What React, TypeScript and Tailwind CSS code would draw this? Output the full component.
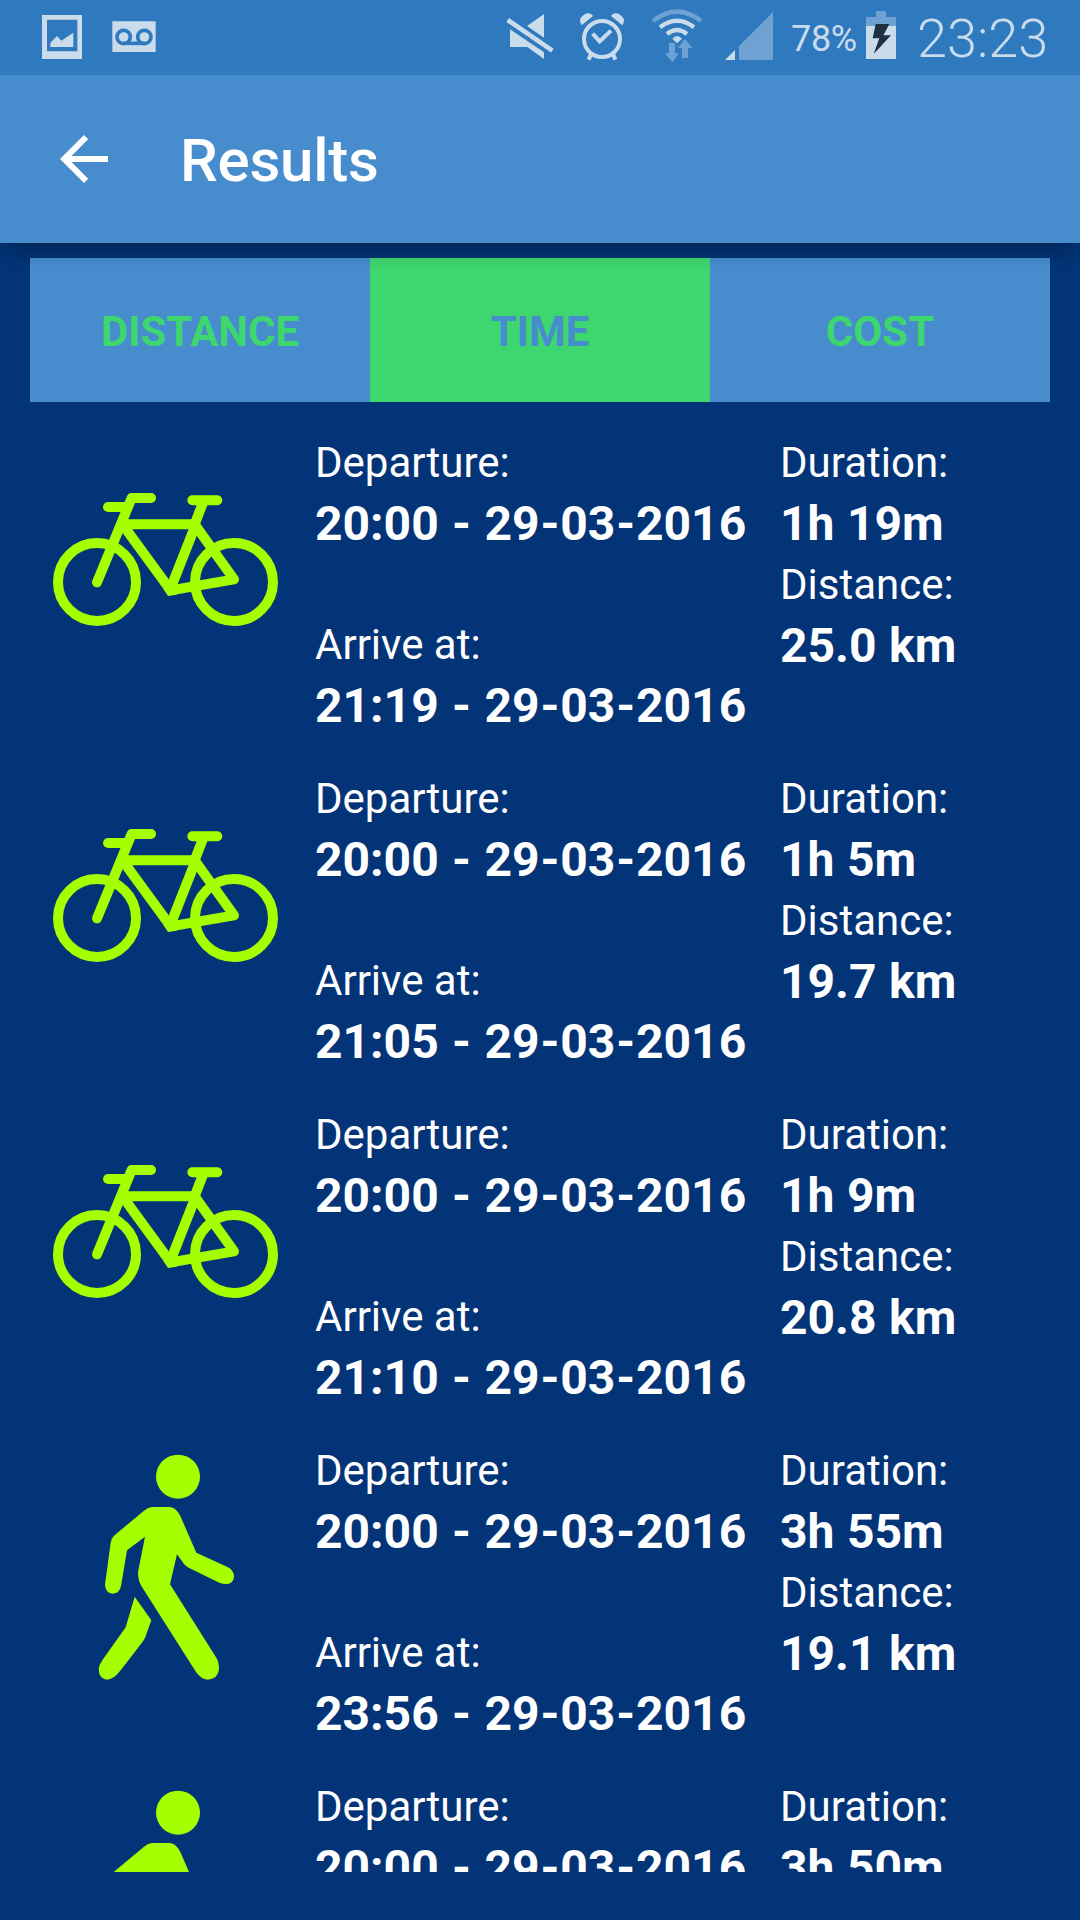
import React from "react";

type Mode = "bike" | "walk";

interface Trip {
  mode: Mode;
  departure: string;
  arrival: string;
  duration: string;
  distance: string;
}

const trips: Trip[] = [
  { mode: "bike", departure: "20:00 - 29-03-2016", arrival: "21:19 - 29-03-2016", duration: "1h 19m", distance: "25.0 km" },
  { mode: "bike", departure: "20:00 - 29-03-2016", arrival: "21:05 - 29-03-2016", duration: "1h 5m", distance: "19.7 km" },
  { mode: "bike", departure: "20:00 - 29-03-2016", arrival: "21:10 - 29-03-2016", duration: "1h 9m", distance: "20.8 km" },
  { mode: "walk", departure: "20:00 - 29-03-2016", arrival: "23:56 - 29-03-2016", duration: "3h 55m", distance: "19.1 km" },
  { mode: "walk", departure: "20:00 - 29-03-2016", arrival: "23:50 - 29-03-2016", duration: "3h 50m", distance: "18.7 km" },
];

function BikeIcon() {
  return (
    <svg className="mt-[53px] h-[180px] w-[270px]" viewBox="0 0 810 540" fill="none" stroke="#a5ff00" strokeWidth="30" strokeLinecap="round" strokeLinejoin="round">
      <circle cx="201" cy="336" r="117" />
      <circle cx="612" cy="336" r="117" />
      <path d="M201 337 L305 84 H363" />
      <path d="M234 111 H290" />
      <path d="M275 163 H496" />
      <path d="M487 91 H562 M520 95 L494 163 L612 328 L422 361" />
      <path d="M494 172 L424 350" />
      <path d="M281 168 L422 361" strokeLinecap="butt" />
      <path d="M400 356 L414 378 L440 374 L436 340 Z" fill="#a5ff00" stroke="none" />
    </svg>
  );
}

function WalkIcon() {
  return (
    <svg className="ml-[50px] mt-[5px] h-[270px] w-[180px]" viewBox="0 0 540 810" fill="#a5ff00">
      <circle cx="294" cy="140" r="66" />
      <path d="M216 231 H268 Q286 231 300 256 L349 368 L444 412 Q462 422 462 440 Q460 462 438 462 Q428 462 418 458 L326 413 Q318 409 312 402 L291 373 L270 463 L408 682 Q417 696 417 718 Q413 748 383 749 Q364 748 348 726 L184 468 Q174 452 174 426 L195 320 L141 361 L123 468 Q119 490 98 491 Q76 489 75 464 L92 338 Q94 325 102 317 L192 242 Q204 232 216 231 Z" />
      <path d="M164 500 L214 571 L196 621 Q193 629 188 635 L122 721 Q102 748 82 749 Q57 747 56 718 Q57 704 68 689 L137 592 Z" />
    </svg>
  );
}

function StatusBar() {
  return (
    <div className="flex h-[75px] shrink-0 items-start bg-[#2f79bf] text-[#cadcec]">
      <svg className="h-[75px] w-[240px]" viewBox="0 0 720 225" fill="#cadcec">
        <path fillRule="evenodd" d="M126 45 H246 V177 H126 Z M141 59 V154 H232 V59 Z" />
        <path d="M151 141 V129 L171 108 L184 122 L220 98 V141 Z" />
        <path d="M337 64 H467 V156 H337 Z" />
        <g fill="none" stroke="#2f79bf" strokeWidth="11">
          <circle cx="371" cy="111" r="20" />
          <circle cx="433" cy="111" r="20" />
          <path d="M371 130 H433" />
        </g>
      </svg>
      <svg className="ml-[250px] h-[75px] w-[300px]" viewBox="0 0 900 225" fill="#cadcec">
        <path d="M162 42 V113 L111 78 Z M60 88 L162 157 V177 L112 141 H60 Z" />
        <path d="M53 60 L187 152" stroke="#cadcec" strokeWidth="14" />
        <g fill="none" stroke="#cadcec">
          <circle cx="336" cy="117" r="54" strokeWidth="12" />
          <path d="M308 101 L329 124 L363 92" strokeWidth="12" />
          <path d="M302 164 L296 179 M370 164 L376 179" strokeWidth="12" />
        </g>
        <path d="M275 76 Q267 63 272 54 Q284 38 298 40 Q307 43 309 48 Z M397 76 Q405 63 400 54 Q388 38 374 40 Q365 43 363 48 Z" />
        <g fill="none" stroke="#6da2d3">
          <path d="M489 63 Q561 7 633 63" strokeWidth="14" />
        </g>
        <g fill="none" stroke="#cadcec" strokeWidth="13">
          <path d="M510 82 Q561 43 612 82" />
          <path d="M531 102 Q561 78 591 102" />
        </g>
        <path d="M547 116 Q561 100 576 116 L561 130 Z" />
        <g fill="#6da2d3">
          <path d="M537 129 H555 V160 H566 L547 187 L525 160 H537 Z" />
          <path d="M585 117 L607 144 H594 V174 H576 V144 H564 Z" />
          <path d="M747 180 V138 L849 36 V180 Z" />
        </g>
        <path d="M705 180 L735 150 V180 Z" />
      </svg>
      <span className="ml-px mt-[18px] w-[75px] whitespace-nowrap text-[36px] leading-[42px] tracking-[-0.3px]">78%</span>
      <svg className="h-[75px] w-[30px]" viewBox="0 0 90 225">
        <path d="M0 51 H30 V33 H60 V51 H90 V80 H0 Z" fill="#6da2d3" />
        <path d="M0 78 H90 V177 H0 Z" fill="#cadcec" />
        <path d="M29 72 H70 L52 106 H75 L23 162 L40 115 H20 Z" fill="#1d3044" />
      </svg>
      <span className="ml-[21px] mt-[7px] whitespace-nowrap text-[54px] font-[350] leading-[64px]">23:23</span>
    </div>
  );
}

function Tab({ label, active = false }: { label: string; active?: boolean }) {
  return (
    <button
      className={
        active
          ? "h-[144px] flex-1 bg-[#3ed66e] pt-[2px] text-[42px] font-bold text-[#478dce]"
          : "h-[144px] flex-1 bg-[#478dce] pt-[2px] text-[42px] font-bold text-[#3ed66e]"
      }
    >
      {label}
    </button>
  );
}

function Field({ label, value }: { label: string; value: string }) {
  const parts = value.split("-");
  return (
    <div className="whitespace-nowrap">
      <div className="text-[42px] leading-[58px]">{label}</div>
      <div className="text-[48px] font-bold leading-[64px] [word-spacing:0.6px]">
        {parts.map((part, i) => (
          <React.Fragment key={i}>
            {i > 0 && <span className="px-[0.9px]">-</span>}
            {part}
          </React.Fragment>
        ))}
      </div>
    </div>
  );
}

function TripRow({ trip }: { trip: Trip }) {
  return (
    <li className="flex h-[336px] shrink-0 border-b-2 border-[#022f6b]">
      <div className="w-[285px] shrink-0">{trip.mode === "bike" ? <BikeIcon /> : <WalkIcon />}</div>
      <div className="flex w-[465px] shrink-0 flex-col gap-[60px] pt-[17px]">
        <Field label="Departure:" value={trip.departure} />
        <Field label="Arrive at:" value={trip.arrival} />
      </div>
      <div className="pt-[17px]">
        <Field label="Duration:" value={trip.duration} />
        <Field label="Distance:" value={trip.distance} />
      </div>
    </li>
  );
}

export default function App() {
  return (
    <div className="flex h-[1920px] w-[1080px] flex-col overflow-hidden bg-[#023477] font-['Roboto',sans-serif] text-white">
      <StatusBar />
      <header className="relative z-10 flex h-[168px] shrink-0 items-center bg-[#478dce] shadow-[0_16px_16px_-6px_rgba(0,0,0,0.25)]">
        <svg className="ml-[60px] h-12 w-12" viewBox="0 0 48 48" fill="white">
          <path d="M48 21 V27 H11.5 L28.2 43.8 L24 48 L0 24 L24 0 L28.2 4.2 L11.5 21 Z" />
        </svg>
        <h1 className="ml-[72px] mt-[3px] text-[60px] font-medium leading-[70px] tracking-[-0.25px]">Results</h1>
      </header>
      <main className="mx-[30px] mb-12 mt-[15px] flex min-h-0 flex-1 flex-col">
        <nav className="flex shrink-0">
          <Tab label="DISTANCE" />
          <Tab label="TIME" active />
          <Tab label="COST" />
        </nav>
        <ul className="mt-[15px] flex min-h-0 flex-1 flex-col overflow-hidden">
          {trips.map((trip, i) => (
            <TripRow key={i} trip={trip} />
          ))}
        </ul>
      </main>
    </div>
  );
}
